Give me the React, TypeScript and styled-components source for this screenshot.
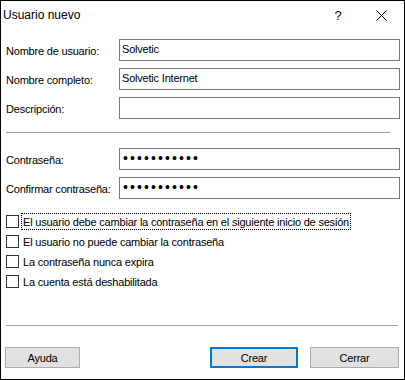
import React from "react";
import styled, { createGlobalStyle } from "styled-components";

const GlobalStyle = createGlobalStyle`
  html, body { margin: 0; padding: 0; background: #ffffff; }
  body { font-family: "Liberation Sans", Arial, sans-serif; font-size: 11px; color: #000; }
  * { box-sizing: border-box; }
`;

const Window = styled.div`
  width: 405px;
  height: 380px;
  border: 1px solid #000;
  background: #fff;
  display: flex;
  flex-direction: column;
`;

const TitleBar = styled.div`
  height: 30px;
  display: flex;
  align-items: center;
  padding-left: 2px;
`;

const Title = styled.div`
  flex: 1;
  font-family: "Liberation Sans", Arial, sans-serif;
  font-size: 12px;
  margin-top: -2px;
`;

const HelpGlyph = styled.div`
  width: 46px;
  text-align: center;
  font-size: 13px;
  margin-top: -2px;
  margin-right: -3px;
`;

const CloseGlyph = styled.div`
  width: 46px;
  display: flex;
  justify-content: center;
  align-items: center;
  margin-top: -2px;
`;

const Body = styled.div`
  padding: 8px 4px 0 5px;
  display: flex;
  flex-direction: column;
  letter-spacing: -0.2px;
`;

const FieldGroup = styled.div<{ $top: number }>`
  display: flex;
  flex-direction: column;
  gap: 7px;
  margin-top: ${(p) => p.$top}px;
`;

const FieldRow = styled.label`
  display: grid;
  grid-template-columns: 113px 1fr;
  align-items: center;
`;

const FieldLabel = styled.span`
  padding-top: 2px;
`;

const TextBox = styled.input`
  height: 22px;
  width: 100%;
  border: 1px solid #7a7a7a;
  padding: 0 0 2px 2px;
  margin: 0;
  font-family: "Liberation Sans", Arial, sans-serif;
  font-size: 11px;
  letter-spacing: -0.2px;
  color: #000;
  background: #fff;
  outline: none;
`;

const PasswordBox = styled(TextBox)`
  font-size: 14px;
  letter-spacing: 2.1px;
  padding-left: 3px;
`;

const Separator = styled.div<{ $top: number; $width: number }>`
  height: 1px;
  background: #a0a0a0;
  width: ${(p) => p.$width}px;
  margin-top: ${(p) => p.$top}px;
`;

const CheckList = styled.div`
  display: flex;
  flex-direction: column;
  gap: 3px;
  margin-top: 14px;
`;

const CheckRow = styled.label`
  display: flex;
  align-items: center;
  height: 17px;
`;

const Box = styled.span`
  width: 13px;
  height: 13px;
  border: 1px solid #333;
  background: #fff;
  flex: none;
`;

const CheckText = styled.span<{ $focused?: boolean }>`
  margin-left: 2px;
  padding: 0 1px 0 1px;
  height: 17px;
  line-height: 16px;
  border: 1px dotted ${(p) => (p.$focused ? "#000" : "transparent")};
`;

const ButtonBar = styled.div`
  display: flex;
  padding: 0 5px 0 4px;
  margin-top: 21px;
`;

const Button = styled.button<{ $width: number; $default?: boolean }>`
  width: ${(p) => p.$width}px;
  height: 21px;
  margin: 0;
  padding: 0;
  background: #e1e1e1;
  border: ${(p) => (p.$default ? "2px solid #0078d7" : "1px solid #adadad")};
  font-family: "Liberation Sans", Arial, sans-serif;
  font-size: 11px;
  letter-spacing: -0.2px;
  color: #000;
`;

const Spacer = styled.div`
  flex: 1;
`;

const ButtonGap = styled.div`
  width: 12px;
`;

const checks = [
  "El usuario debe cambiar la contraseña en el siguiente inicio de sesión",
  "El usuario no puede cambiar la contraseña",
  "La contraseña nunca expira",
  "La cuenta está deshabilitada",
];

export default function App() {
  return (
    <>
      <GlobalStyle />
      <Window>
        <TitleBar>
          <Title>Usuario nuevo</Title>
          <HelpGlyph>?</HelpGlyph>
          <CloseGlyph>
            <svg width="11" height="11" viewBox="0 0 11 11">
              <path d="M0.5 0.5 L10.5 10.5 M10.5 0.5 L0.5 10.5" stroke="#000" strokeWidth="1" fill="none" />
            </svg>
          </CloseGlyph>
        </TitleBar>
        <Body>
          <FieldGroup $top={0}>
            <FieldRow>
              <FieldLabel>Nombre de usuario:</FieldLabel>
              <TextBox readOnly value="Solvetic" />
            </FieldRow>
            <FieldRow>
              <FieldLabel>Nombre completo:</FieldLabel>
              <TextBox readOnly value="Solvetic Internet" />
            </FieldRow>
            <FieldRow>
              <FieldLabel>Descripción:</FieldLabel>
              <TextBox readOnly value="" />
            </FieldRow>
          </FieldGroup>
          <Separator $top={13} $width={384} />
          <FieldGroup $top={15}>
            <FieldRow>
              <FieldLabel>Contraseña:</FieldLabel>
              <PasswordBox type="password" readOnly value="12345678901" />
            </FieldRow>
            <FieldRow>
              <FieldLabel>Confirmar contraseña:</FieldLabel>
              <PasswordBox type="password" readOnly value="12345678901" />
            </FieldRow>
          </FieldGroup>
          <CheckList>
            {checks.map((c, i) => (
              <CheckRow key={c}>
                <Box />
                <CheckText $focused={i === 0}>{c}</CheckText>
              </CheckRow>
            ))}
          </CheckList>
          <Separator $top={35} $width={392} />
        </Body>
        <ButtonBar>
          <Button $width={75}>Ayuda</Button>
          <Spacer />
          <Button $width={88} $default>Crear</Button>
          <ButtonGap />
          <Button $width={89}>Cerrar</Button>
        </ButtonBar>
      </Window>
    </>
  );
}
